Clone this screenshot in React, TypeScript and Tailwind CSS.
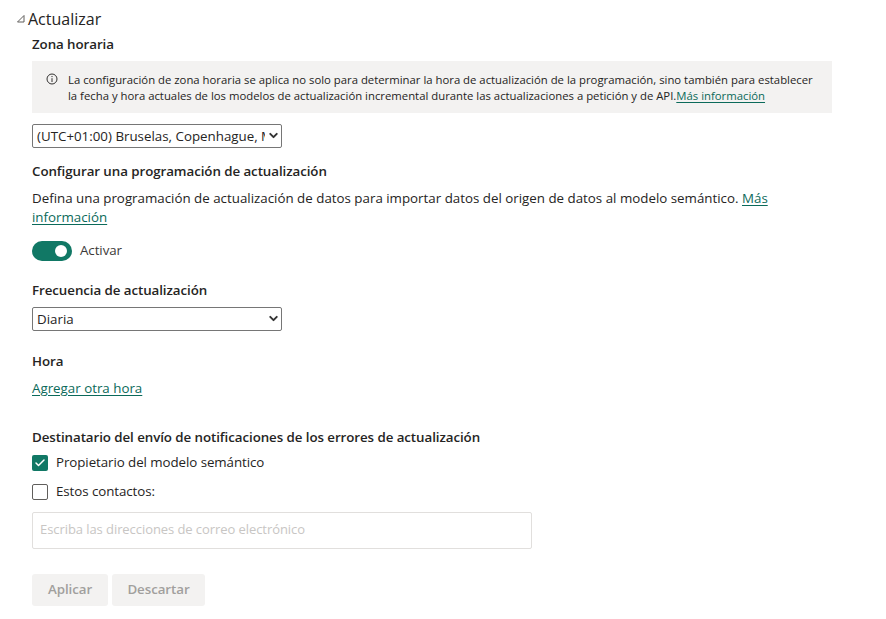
import { Check, ChevronDown } from 'lucide-react';

function Select({ value }: { value: string }) {
  return (
    <div className="relative h-6 w-[250px]">
      <select
        defaultValue={value}
        className="h-6 w-full appearance-none rounded-[2px] border border-[#767676] bg-white pl-[4px] pr-[16px] text-[13.33px] leading-[22px] text-[#252423] outline-none"
      >
        <option>{value}</option>
      </select>
      <ChevronDown size={13} strokeWidth={3.6} className="pointer-events-none absolute right-[2px] top-[6px] text-[#333]" />
    </div>
  );
}

function Link({ children }: { children: string }) {
  return <a className="text-[#0b6a5a] underline underline-offset-[2px]">{children}</a>;
}

export default function App() {
  return (
    <div className="h-[619px] w-[886px] overflow-hidden bg-white font-['Open_Sans','Noto_Sans',sans-serif] text-[#252423]">
      <div className="flex h-[37px] items-center pl-[16px]">
        <svg width="9" height="9" viewBox="0 0 9 9" className="mr-[3px]" fill="none" stroke="#605e5c" strokeWidth="1">
          <path d="M8 1.5V8H1.5z" />
        </svg>
        <span className="text-[16px] leading-5">Actualizar</span>
      </div>

      <div className="pl-[32px]">
        <h3 className="-mt-[2px] text-[13.33px] font-semibold leading-[18px] tracking-[-0.07px]">Zona horaria</h3>

        <div className="mt-[8px] flex h-[52px] w-[800px] items-start bg-[#f3f2f1] pl-[14px] pt-[11px]">
          <svg width="12" height="12" viewBox="0 0 12 12" className="mt-[1px] shrink-0" fill="none" stroke="#323130" strokeWidth="1">
            <circle cx="6" cy="6" r="5" />
            <path d="M6 5.2V9M6 3v1.1" />
          </svg>
          <p className="ml-[10px] whitespace-nowrap text-[11.33px] leading-4">
            La configuración de zona horaria se aplica no solo para determinar la hora de actualización de la programación, sino también para establecer
            <br />
            la fecha y hora actuales de los modelos de actualización incremental durante las actualizaciones a petición y de API.<Link>Más información</Link>
          </p>
        </div>

        <div className="mt-[10px]">
          <Select value="(UTC+01:00) Bruselas, Copenhague, Madrid, París" />
        </div>

        <h3 className="mt-[15px] text-[13.33px] font-semibold leading-[18px] tracking-[-0.07px]">Configurar una programación de actualización</h3>
        <p className="mt-[9px] w-[780px] text-[13.33px] leading-[19px]">
          Defina una programación de actualización de datos para importar datos del origen de datos al modelo semántico. <Link>Más información</Link>
        </p>

        <div className="mt-[14px] flex h-5 items-center">
          <div className="flex h-5 w-10 items-center justify-end rounded-full bg-[#117865] pr-[5px]">
            <div className="h-[12px] w-[12px] rounded-full bg-white" />
          </div>
          <span className="ml-2 text-[13.33px] tracking-[-0.07px] text-[#3b3a39]">Activar</span>
        </div>

        <h3 className="mt-[20px] text-[13.33px] font-semibold leading-[18px] tracking-[-0.07px]">Frecuencia de actualización</h3>
        <div className="mt-[7px]">
          <Select value="Diaria" />
        </div>

        <h3 className="mt-[22px] text-[13.33px] font-semibold leading-[18px] tracking-[-0.07px]">Hora</h3>
        <p className="mt-[9px] text-[13.33px] leading-[19px]">
          <Link>Agregar otra hora</Link>
        </p>

        <h3 className="mt-[30px] text-[13.33px] font-semibold leading-[18px] tracking-[-0.07px]">Destinatario del envío de notificaciones de los errores de actualización</h3>

        <label className="mt-[9px] flex h-4 items-center">
          <span className="flex h-4 w-4 items-center justify-center rounded-[2px] bg-[#117865]">
            <Check size={12} strokeWidth={3} className="text-white" />
          </span>
          <span className="ml-2 text-[13.33px] tracking-[-0.07px]">Propietario del modelo semántico</span>
        </label>
        <label className="mt-[13px] flex h-4 items-center">
          <span className="h-4 w-4 rounded-[2px] border border-[#605e5c] bg-white" />
          <span className="ml-2 text-[13.33px] tracking-[-0.07px]">Estos contactos:</span>
        </label>

        <input
          disabled
          placeholder="Escriba las direcciones de correo electrónico"
          className="mt-[12px] block h-[37px] w-[500px] rounded-[2px] border border-[#e1dfdd] bg-white pb-[4px] pl-[7px] pr-[8px] text-[13px] tracking-[-0.07px] placeholder:text-[#c8c6c4]"
        />

        <div className="mt-[25px] flex gap-[4px]">
          <button className="h-8 w-[76px] rounded-[3px] bg-[#f3f2f1] text-[13.33px] font-semibold tracking-[-0.07px] text-[#a19f9d]">Aplicar</button>
          <button className="h-8 w-[93px] rounded-[3px] bg-[#f3f2f1] text-[13.33px] font-semibold tracking-[-0.07px] text-[#a19f9d]">Descartar</button>
        </div>
      </div>
    </div>
  );
}
